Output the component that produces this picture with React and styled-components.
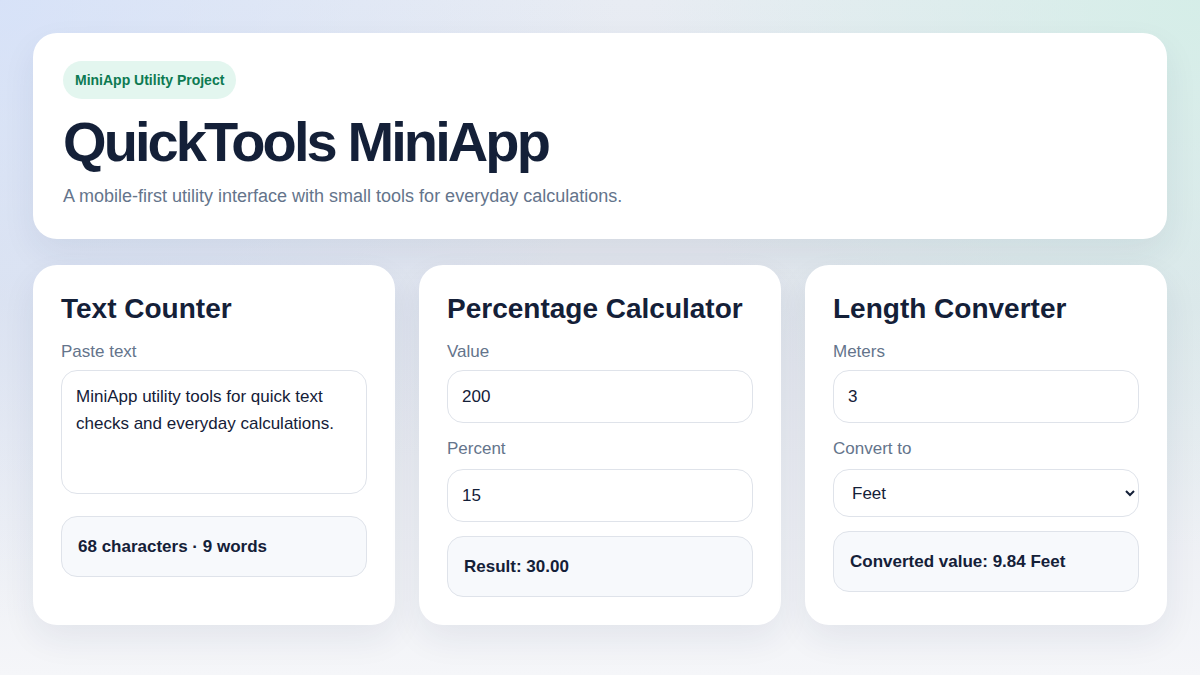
import React, { useState } from 'react'
import styled, { createGlobalStyle } from 'styled-components'

const GlobalStyle = createGlobalStyle`
  * { box-sizing: border-box; }
  html, body { margin: 0; padding: 0; }
  body {
    font-family: 'Liberation Sans', Arial, sans-serif;
    color: #142038;
    background: #eef1f6;
  }
`

const Page = styled.div`
  min-height: 675px;
  padding: 33px 33px 48px;
  background:
    radial-gradient(circle at 0% 0%, rgba(208, 222, 250, 0.7), rgba(208, 222, 250, 0) 45%),
    radial-gradient(circle at 100% 0%, rgba(210, 238, 230, 0.85), rgba(210, 238, 230, 0) 40%),
    linear-gradient(180deg, #e8ecf3 0%, #e1e5ed 45%, #f5f6f9 100%);
  display: flex;
  flex-direction: column;
  gap: 26px;
`

const Hero = styled.header`
  background: #ffffff;
  border-radius: 24px;
  padding: 28px 30px 30px;
  box-shadow: 0 14px 34px rgba(30, 45, 80, 0.07);
`

const Badge = styled.span`
  display: inline-block;
  background: #e3f6ef;
  color: #0d7a52;
  font-size: 14px;
  font-weight: 700;
  line-height: 38px;
  padding: 0 12px;
  border-radius: 19px;
`

const Title = styled.h1`
  margin: 11px 0 0;
  font-size: 56px;
  line-height: 64px;
  font-weight: 700;
  letter-spacing: -2.9px;
  color: #142038;
`

const Subtitle = styled.p`
  margin: 9px 0 0;
  font-size: 18px;
  line-height: 26px;
  color: #64748b;
`

const Grid = styled.section`
  display: grid;
  grid-template-columns: repeat(3, 1fr);
  gap: 24px;
`

const Card = styled.div`
  background: #ffffff;
  border-radius: 24px;
  padding: 27px 28px 28px;
  height: 360px;
  box-shadow: 0 14px 34px rgba(30, 45, 80, 0.07);
  display: flex;
  flex-direction: column;
`

const CardTitle = styled.h2`
  margin: 0 0 16px;
  font-size: 28px;
  line-height: 34px;
  font-weight: 700;
  color: #142038;
`

const Label = styled.label`
  display: block;
  font-size: 17px;
  line-height: 20px;
  color: #64748b;
  margin: ${p => (p.$first ? '0 0 8px' : '16px 0 10px')};
`

const Field = styled.input`
  display: block;
  width: 100%;
  height: 53px;
  border: 1px solid #dfe3ea;
  border-radius: 16px;
  padding: 0 14px;
  font: inherit;
  font-size: 17px;
  color: #142038;
  background: #fff;
  outline: none;
`

const TextBox = styled.textarea`
  display: block;
  width: 100%;
  height: 124px;
  border: 1px solid #dfe3ea;
  border-radius: 16px;
  padding: 12px 14px;
  font: inherit;
  font-size: 17px;
  line-height: 27px;
  color: #142038;
  resize: none;
  outline: none;
`

const Select = styled.select`
  display: block;
  width: 100%;
  height: 48px;
  border: 1px solid #dfe3ea;
  border-radius: 16px;
  padding: 0 14px;
  font: inherit;
  font-size: 17px;
  color: #142038;
  background: #fff;
  outline: none;
`

const Result = styled.div`
  margin-top: ${p => p.$gap}px;
  height: 61px;
  display: flex;
  align-items: center;
  padding: 0 16px;
  background: #f7f9fc;
  border: 1px solid #dfe3ea;
  border-radius: 16px;
  font-size: 17px;
  font-weight: 700;
  color: #142038;
`

const FEET_PER_METER = 3.28084

export default function App() {
  const [text, setText] = useState('MiniApp utility tools for quick text checks and everyday calculations.')
  const [value, setValue] = useState('200')
  const [percent, setPercent] = useState('15')
  const [meters, setMeters] = useState('3')
  const [unit, setUnit] = useState('Feet')

  const chars = 68
  const words = 9
  const result = ((parseFloat(value) || 0) * (parseFloat(percent) || 0)) / 100
  const factor = unit === 'Feet' ? FEET_PER_METER : unit === 'Centimeters' ? 100 : 39.3701
  const converted = (parseFloat(meters) || 0) * factor

  return (
    <>
      <GlobalStyle />
      <Page>
        <Hero>
          <Badge>MiniApp Utility Project</Badge>
          <Title>QuickTools MiniApp</Title>
          <Subtitle>A mobile-first utility interface with small tools for everyday calculations.</Subtitle>
        </Hero>

        <Grid>
          <Card>
            <CardTitle>Text Counter</CardTitle>
            <Label $first>Paste text</Label>
            <TextBox value={text} onChange={e => setText(e.target.value)} />
            <Result $gap={22}>{chars} characters · {words} words</Result>
          </Card>

          <Card>
            <CardTitle>Percentage Calculator</CardTitle>
            <Label $first>Value</Label>
            <Field value={value} onChange={e => setValue(e.target.value)} />
            <Label>Percent</Label>
            <Field value={percent} onChange={e => setPercent(e.target.value)} />
            <Result $gap={14}>Result: {result.toFixed(2)}</Result>
          </Card>

          <Card>
            <CardTitle>Length Converter</CardTitle>
            <Label $first>Meters</Label>
            <Field value={meters} onChange={e => setMeters(e.target.value)} />
            <Label>Convert to</Label>
            <Select value={unit} onChange={e => setUnit(e.target.value)}>
              <option>Feet</option>
              <option>Centimeters</option>
              <option>Inches</option>
            </Select>
            <Result $gap={14}>Converted value: {converted.toFixed(2)} {unit}</Result>
          </Card>
        </Grid>
      </Page>
    </>
  )
}
